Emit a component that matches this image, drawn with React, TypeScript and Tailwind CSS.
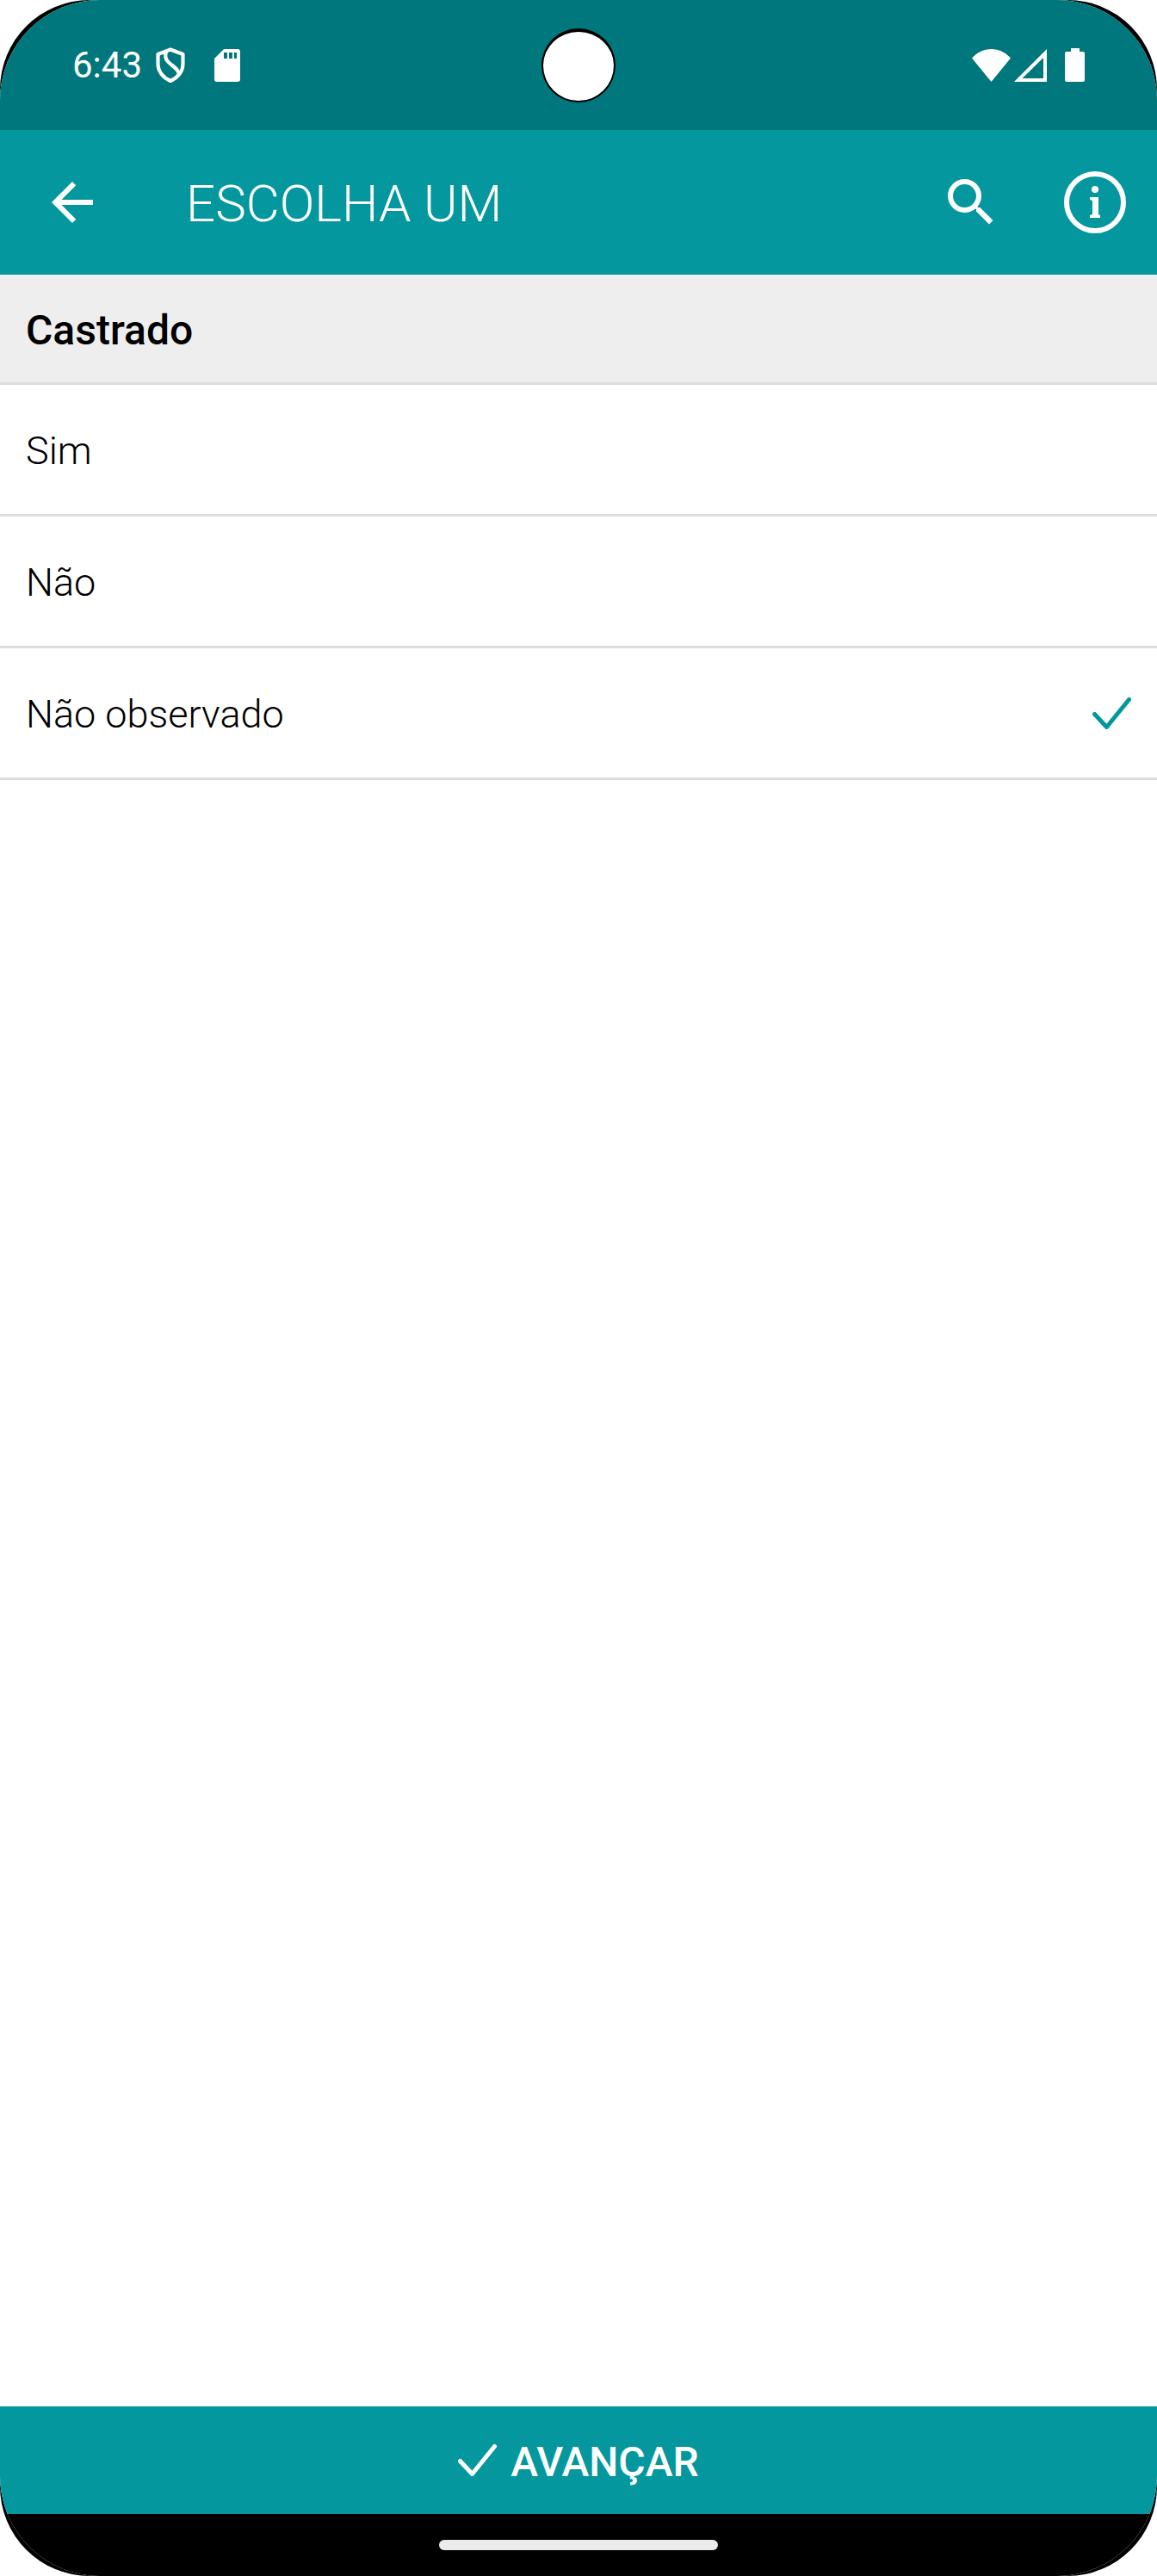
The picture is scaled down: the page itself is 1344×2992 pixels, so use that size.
import { useState } from "react";
import { MdArrowBack, MdSearch } from "react-icons/md";

const OPTIONS = [
  { id: "sim", label: "Sim" },
  { id: "nao", label: "Não" },
  { id: "nao-observado", label: "Não observado" },
];

function CheckIcon({ className }: { className?: string }) {
  return (
    <svg
      viewBox="0 0 45 37"
      fill="none"
      stroke="currentColor"
      strokeWidth="5"
      strokeLinecap="round"
      strokeLinejoin="round"
      className={className}
      aria-hidden="true"
    >
      <path d="M2.5 19.5 16.5 34.5 42.5 2.5" />
    </svg>
  );
}

function InfoIcon() {
  return (
    <svg viewBox="0 0 72 72" className="size-[72px]" fill="currentColor" aria-hidden="true">
      <circle cx="36" cy="36" r="33" fill="none" stroke="currentColor" strokeWidth="6" />
      <circle cx="36" cy="21" r="4" />
      <path d="M30 30h10v20l2 1v3H30v-3l3-1V34l-3-1z" />
    </svg>
  );
}

function ShieldIcon() {
  return (
    <svg
      viewBox="0 0 34 42"
      className="h-[42px] w-[34px]"
      fill="none"
      stroke="currentColor"
      strokeWidth="4.2"
      strokeLinejoin="round"
      aria-hidden="true"
    >
      <path d="M17 2.5 31.5 8v11c0 9-6 16.500-14.500 20C8.500 35.500 2.500 28 2.500 19V8z" />
      <path d="M12 5C9.500 14 14 17 18.500 20.500c5 4 8 6.500 8.500 11.500" />
    </svg>
  );
}

function SdCardIcon() {
  return (
    <svg viewBox="0 0 30 38" className="h-[38px] w-[30px]" fill="currentColor" aria-hidden="true">
      <path
        fillRule="evenodd"
        d="M11 0h16a3 3 0 0 1 3 3v32a3 3 0 0 1-3 3H3a3 3 0 0 1-3-3V11zM11 4v7h4V4zm6 0v7h4V4zm6 0v7h3V4z"
      />
    </svg>
  );
}

function WifiIcon() {
  return (
    <svg viewBox="0 0 45 38" className="h-[38px] w-[45px]" fill="currentColor" aria-hidden="true">
      <path d="M22.5 38 0 10.5C6 4 14 0 22.5 0S39 4 45 10.5z" />
    </svg>
  );
}

function SignalIcon() {
  return (
    <svg viewBox="0 0 38 38" className="size-[38px]" fill="currentColor" aria-hidden="true">
      <path fillRule="evenodd" d="M38 0v38H0zM34 10 9.5 34H34z" />
    </svg>
  );
}

function BatteryIcon() {
  return (
    <svg viewBox="0 0 23 39" className="h-[39px] w-[23px]" fill="currentColor" aria-hidden="true">
      <path d="M7 0h10v4h4a2 2 0 0 1 2 2v31a2 2 0 0 1-2 2H2a2 2 0 0 1-2-2V6a2 2 0 0 1 2-2h5z" />
    </svg>
  );
}

function StatusBar() {
  return (
    <div className="relative flex h-[151px] items-center justify-between bg-[#00777c] px-[84px] text-white">
      <div className="flex items-center">
        <span className="text-[42px]">6:43</span>
        <div className="ml-4 flex items-center gap-[34px]">
          <ShieldIcon />
          <SdCardIcon />
        </div>
      </div>

      {/* camera cutout */}
      <div className="absolute inset-0 flex items-center justify-center">
        <div className="size-[86px] rounded-full border-2 border-t-4 border-black bg-white" />
      </div>

      <div className="flex items-center">
        <WifiIcon />
        <div className="ml-1 flex items-center gap-[21px]">
          <SignalIcon />
          <BatteryIcon />
        </div>
      </div>
    </div>
  );
}

export default function App() {
  const [selected, setSelected] = useState("nao-observado");

  return (
    <div className="overflow-hidden rounded-[104px] bg-black font-['Roboto',sans-serif]">
      <div className="flex min-h-screen flex-col overflow-hidden rounded-[116px] bg-white text-black">
        <StatusBar />

        <header className="flex h-[168px] items-center bg-[#04979e] pr-9 pl-12 text-white">
          <button type="button" aria-label="Voltar">
            <MdArrowBack className="size-[72px]" />
          </button>
          <h1 className="ml-24 flex-1 pt-1 text-[60px] font-light">ESCOLHA UM</h1>
          <div className="flex items-center gap-[72px]">
            <button type="button" aria-label="Buscar">
              <MdSearch className="size-[72px]" />
            </button>
            <button type="button" aria-label="Informações">
              <InfoIcon />
            </button>
          </div>
        </header>

        <main className="flex-1">
          <h2
            id="question"
            className="flex h-32 items-center border-b-3 border-[#dddddd] bg-[#eeeeee] px-[30px] pt-1 text-[48px] font-medium"
          >
            Castrado
          </h2>
          <div role="radiogroup" aria-labelledby="question">
            {OPTIONS.map((option) => (
              <label
                key={option.id}
                className="relative flex h-[153px] cursor-pointer items-center justify-between border-b-3 border-[#dddddd] px-[30px] text-[45px] font-light"
              >
                <input
                  type="radio"
                  name="castrado"
                  value={option.id}
                  checked={selected === option.id}
                  onChange={() => setSelected(option.id)}
                  className="sr-only"
                />
                <span className="pt-1">{option.label}</span>
                {selected === option.id && (
                  <CheckIcon className="h-[37px] w-[45px] text-[#04979e]" />
                )}
              </label>
            ))}
          </div>
        </main>

        <button
          type="button"
          className="flex h-[125px] w-full items-center justify-center gap-4 bg-[#04979e] text-[48px] font-medium text-white"
        >
          <CheckIcon className="h-[37px] w-[45px]" />
          <span className="pt-1">AVANÇAR</span>
        </button>

        <div className="flex h-[72px] items-center justify-center bg-black">
          <div className="h-3 w-[324px] rounded-full bg-[#ebebeb]" />
        </div>
      </div>
    </div>
  );
}
